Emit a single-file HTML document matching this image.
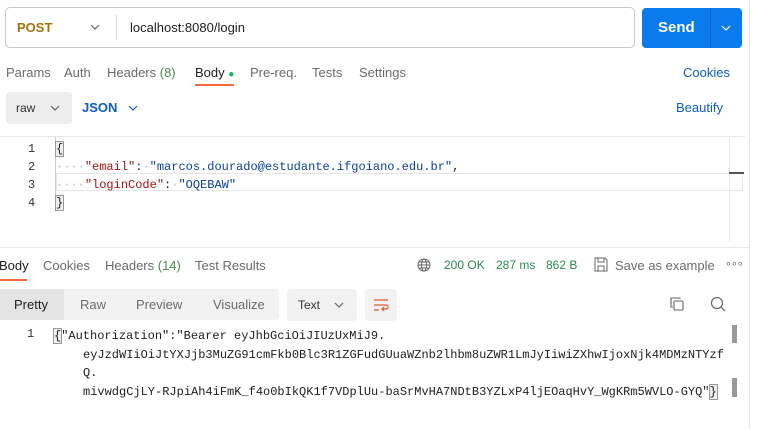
<!DOCTYPE html>
<html><head><meta charset="utf-8"><style>
*{margin:0;padding:0;box-sizing:border-box}
body{width:760px;height:429px;background:#fff;font-family:"Liberation Sans",sans-serif;position:relative;overflow:hidden;color:#212121}
.a{position:absolute;white-space:nowrap}
.t{font-size:13px;color:#6b6b6b}
.mono{font-family:"Liberation Mono",monospace;font-size:12px}
.k{color:#a31515}.s{color:#0a3f9c}
.dot{color:#bbb}
</style></head><body>
<div class="a" style="left:5px;top:7px;width:630px;height:41px;border:1px solid #c8c8c8;border-radius:5px"></div>
<div class="a" style="left:17px;top:20px;font-size:13px;font-weight:bold;color:#a3720a">POST</div>
<svg class="a" style="left:90px;top:24px" width="10" height="6"><path d="M1 1l4 4 4-4" fill="none" stroke="#666" stroke-width="1.2"/></svg>
<div class="a" style="left:116px;top:15px;width:1px;height:25px;background:#ddd"></div>
<div class="a" style="left:130px;top:20px;font-size:13px;color:#212121">localhost:8080/login</div>
<div class="a" style="left:642px;top:8px;width:100px;height:40px;background:#097bed;border-radius:4px"></div>
<div class="a" style="left:710px;top:8px;width:1px;height:40px;background:#0a68c8"></div>
<div class="a" style="left:658px;top:19px;font-size:15px;font-weight:bold;color:#fff">Send</div>
<svg class="a" style="left:721px;top:25px" width="10" height="6"><path d="M1 1l4 4 4-4" fill="none" stroke="#fff" stroke-width="1.2"/></svg>
<div class="a" style="left:749px;top:0;width:1px;height:429px;background:#e6e6e6"></div>

<div class="a t" style="left:6px;top:65px">Params</div>
<div class="a t" style="left:64px;top:65px">Auth</div>
<div class="a t" style="left:107px;top:65px">Headers <span style="color:#4a8a4a">(8)</span></div>
<div class="a t" style="left:195px;top:65px;color:#212121">Body <span style="color:#0cbb52;font-size:10px">●</span></div>
<div class="a" style="left:195px;top:84px;width:39px;height:2px;background:#f26b3a"></div>
<div class="a t" style="left:250px;top:65px">Pre-req.</div>
<div class="a t" style="left:312px;top:65px">Tests</div>
<div class="a t" style="left:359px;top:65px">Settings</div>
<div class="a" style="left:683px;top:65px;font-size:13px;color:#0b5dd0">Cookies</div>

<div class="a" style="left:6px;top:92px;width:66px;height:32px;background:#ededed;border-radius:4px"></div>
<div class="a" style="left:16px;top:101px;font-size:12px;color:#333">raw</div>
<svg class="a" style="left:50px;top:105px" width="10" height="6"><path d="M1 1l4 4 4-4" fill="none" stroke="#666" stroke-width="1.2"/></svg>
<div class="a" style="left:82px;top:100px;font-size:13px;font-weight:bold;color:#0b5dd0">JSON</div>
<svg class="a" style="left:128px;top:105px" width="10" height="6"><path d="M1 1l4 4 4-4" fill="none" stroke="#0b5dd0" stroke-width="1.2"/></svg>
<div class="a" style="left:676px;top:100px;font-size:13px;color:#0b5dd0">Beautify</div>

<div class="a" style="left:0;top:136px;width:745px;height:1px;background:#e6e6e6"></div>
<div class="a" style="left:729px;top:137px;width:1px;height:104px;background:#e6e6e6"></div>
<div class="a" style="left:56px;top:173px;width:687px;height:18px;border:1px solid #e6e6e6"></div>
<div class="a" style="left:729px;top:172px;width:15px;height:2px;background:#555"></div>
<div class="a" style="left:55px;top:137px;width:1px;height:72px;background:#ccc"></div>
<div class="a mono" style="left:28px;top:140px;color:#333;line-height:18px">1<br>2<br>3<br>4</div>
<div class="a mono" style="left:56px;top:140px;line-height:18px;color:#212121"><span style="background:#eee;outline:1px solid #999">{</span><br><span class="dot">····</span><span class="k">"email"</span>:<span class="dot">·</span><span class="s">"marcos.dourado@estudante.ifgoiano.edu.br"</span>,<br><span class="dot">····</span><span class="k">"loginCode"</span>:<span class="dot">·</span><span class="s">"OQEBAW"</span><br><span style="background:#eee;outline:1px solid #999">}</span></div>

<div class="a" style="left:0;top:247px;width:749px;height:1px;background:#e6e6e6"></div>
<div class="a t" style="left:-1px;top:258px;color:#212121">Body</div>
<div class="a" style="left:0;top:279px;width:27px;height:2px;background:#f26b3a"></div>
<div class="a t" style="left:43px;top:258px">Cookies</div>
<div class="a t" style="left:105px;top:258px">Headers <span style="color:#4a8a4a">(14)</span></div>
<div class="a t" style="left:195px;top:258px">Test Results</div>
<svg class="a" style="left:417px;top:258px" width="14" height="14" fill="none" stroke="#666" stroke-width="1"><circle cx="7" cy="7" r="6"/><ellipse cx="7" cy="7" rx="2.5" ry="6"/><path d="M1 7h12M2 4h10M2 10h10"/></svg>
<div class="a" style="left:444px;top:258px;font-size:12px;color:#2b8a50">200 OK</div>
<div class="a" style="left:496px;top:258px;font-size:12px;color:#2b8a50">287 ms</div>
<div class="a" style="left:546px;top:258px;font-size:12px;color:#2b8a50">862 B</div>
<svg class="a" style="left:594px;top:257px" width="14" height="15" fill="none" stroke="#666" stroke-width="1"><path d="M1 1h10l2 2v11H1z M4 1v4h6V1 M4 14V9h6v5"/></svg>
<div class="a t" style="left:615px;top:258px">Save as example</div>
<div class="a" style="left:725px;top:257px;font-size:11px;color:#666;letter-spacing:-1px">∘∘∘</div>

<div class="a" style="left:0;top:289px;width:279px;height:31px;background:#f2f2f2;border-radius:4px"></div>
<div class="a" style="left:0;top:289px;width:64px;height:31px;background:#e4e4e4"></div>
<div class="a t" style="left:14px;top:297px;color:#212121">Pretty</div>
<div class="a t" style="left:80px;top:297px">Raw</div>
<div class="a t" style="left:136px;top:297px">Preview</div>
<div class="a t" style="left:213px;top:297px">Visualize</div>
<div class="a" style="left:287px;top:289px;width:70px;height:32px;background:#f2f2f2;border-radius:4px"></div>
<div class="a" style="left:298px;top:298px;font-size:12px;color:#333">Text</div>
<svg class="a" style="left:334px;top:302px" width="10" height="6"><path d="M1 1l4 4 4-4" fill="none" stroke="#666" stroke-width="1.2"/></svg>
<div class="a" style="left:365px;top:289px;width:32px;height:32px;background:#f2f2f2;border-radius:4px"></div>
<svg class="a" style="left:373px;top:298px" width="16" height="14" fill="none" stroke="#e0592a" stroke-width="1.2"><path d="M1 2h14M1 7h12a2 2 0 010 4H9M11 9l-2 2 2 2M1 12h5"/></svg>
<svg class="a" style="left:670px;top:297px" width="14" height="14" fill="none" stroke="#666" stroke-width="1.1"><rect x="4" y="4" width="9" height="9" rx="1"/><path d="M10 2V1H1v9h2"/></svg>
<svg class="a" style="left:710px;top:296px" width="16" height="16" fill="none" stroke="#666" stroke-width="1.2"><circle cx="7" cy="7" r="5.5"/><path d="M11 11l4 4"/></svg>

<div class="a mono" style="left:27px;top:327px;color:#333">1</div>
<div class="a" style="left:732px;top:325px;width:5px;height:18px;background:#999"></div>
<div class="a" style="left:732px;top:378px;width:5px;height:19px;background:#999"></div>
<div class="a mono" style="left:54px;top:327px;line-height:18.5px;color:#212121"><span style="background:#eee;outline:1px solid #999">{</span>"Authorization":"Bearer eyJhbGciOiJIUzUxMiJ9.</div>
<div class="a mono" style="left:83px;top:345.5px;line-height:18.5px;color:#212121">eyJzdWIiOiJtYXJjb3MuZG91cmFkb0Blc3R1ZGFudGUuaWZnb2lhbm8uZWR1LmJyIiwiZXhwIjoxNjk4MDMzNTYzf<br>Q.<br>mivwdgCjLY-RJpiAh4iFmK_f4o0bIkQK1f7VDplUu-baSrMvHA7NDtB3YZLxP4ljEOaqHvY_WgKRm5WVLO-GYQ"<span style="background:#eee;outline:1px solid #999">}</span></div>
</body></html>
